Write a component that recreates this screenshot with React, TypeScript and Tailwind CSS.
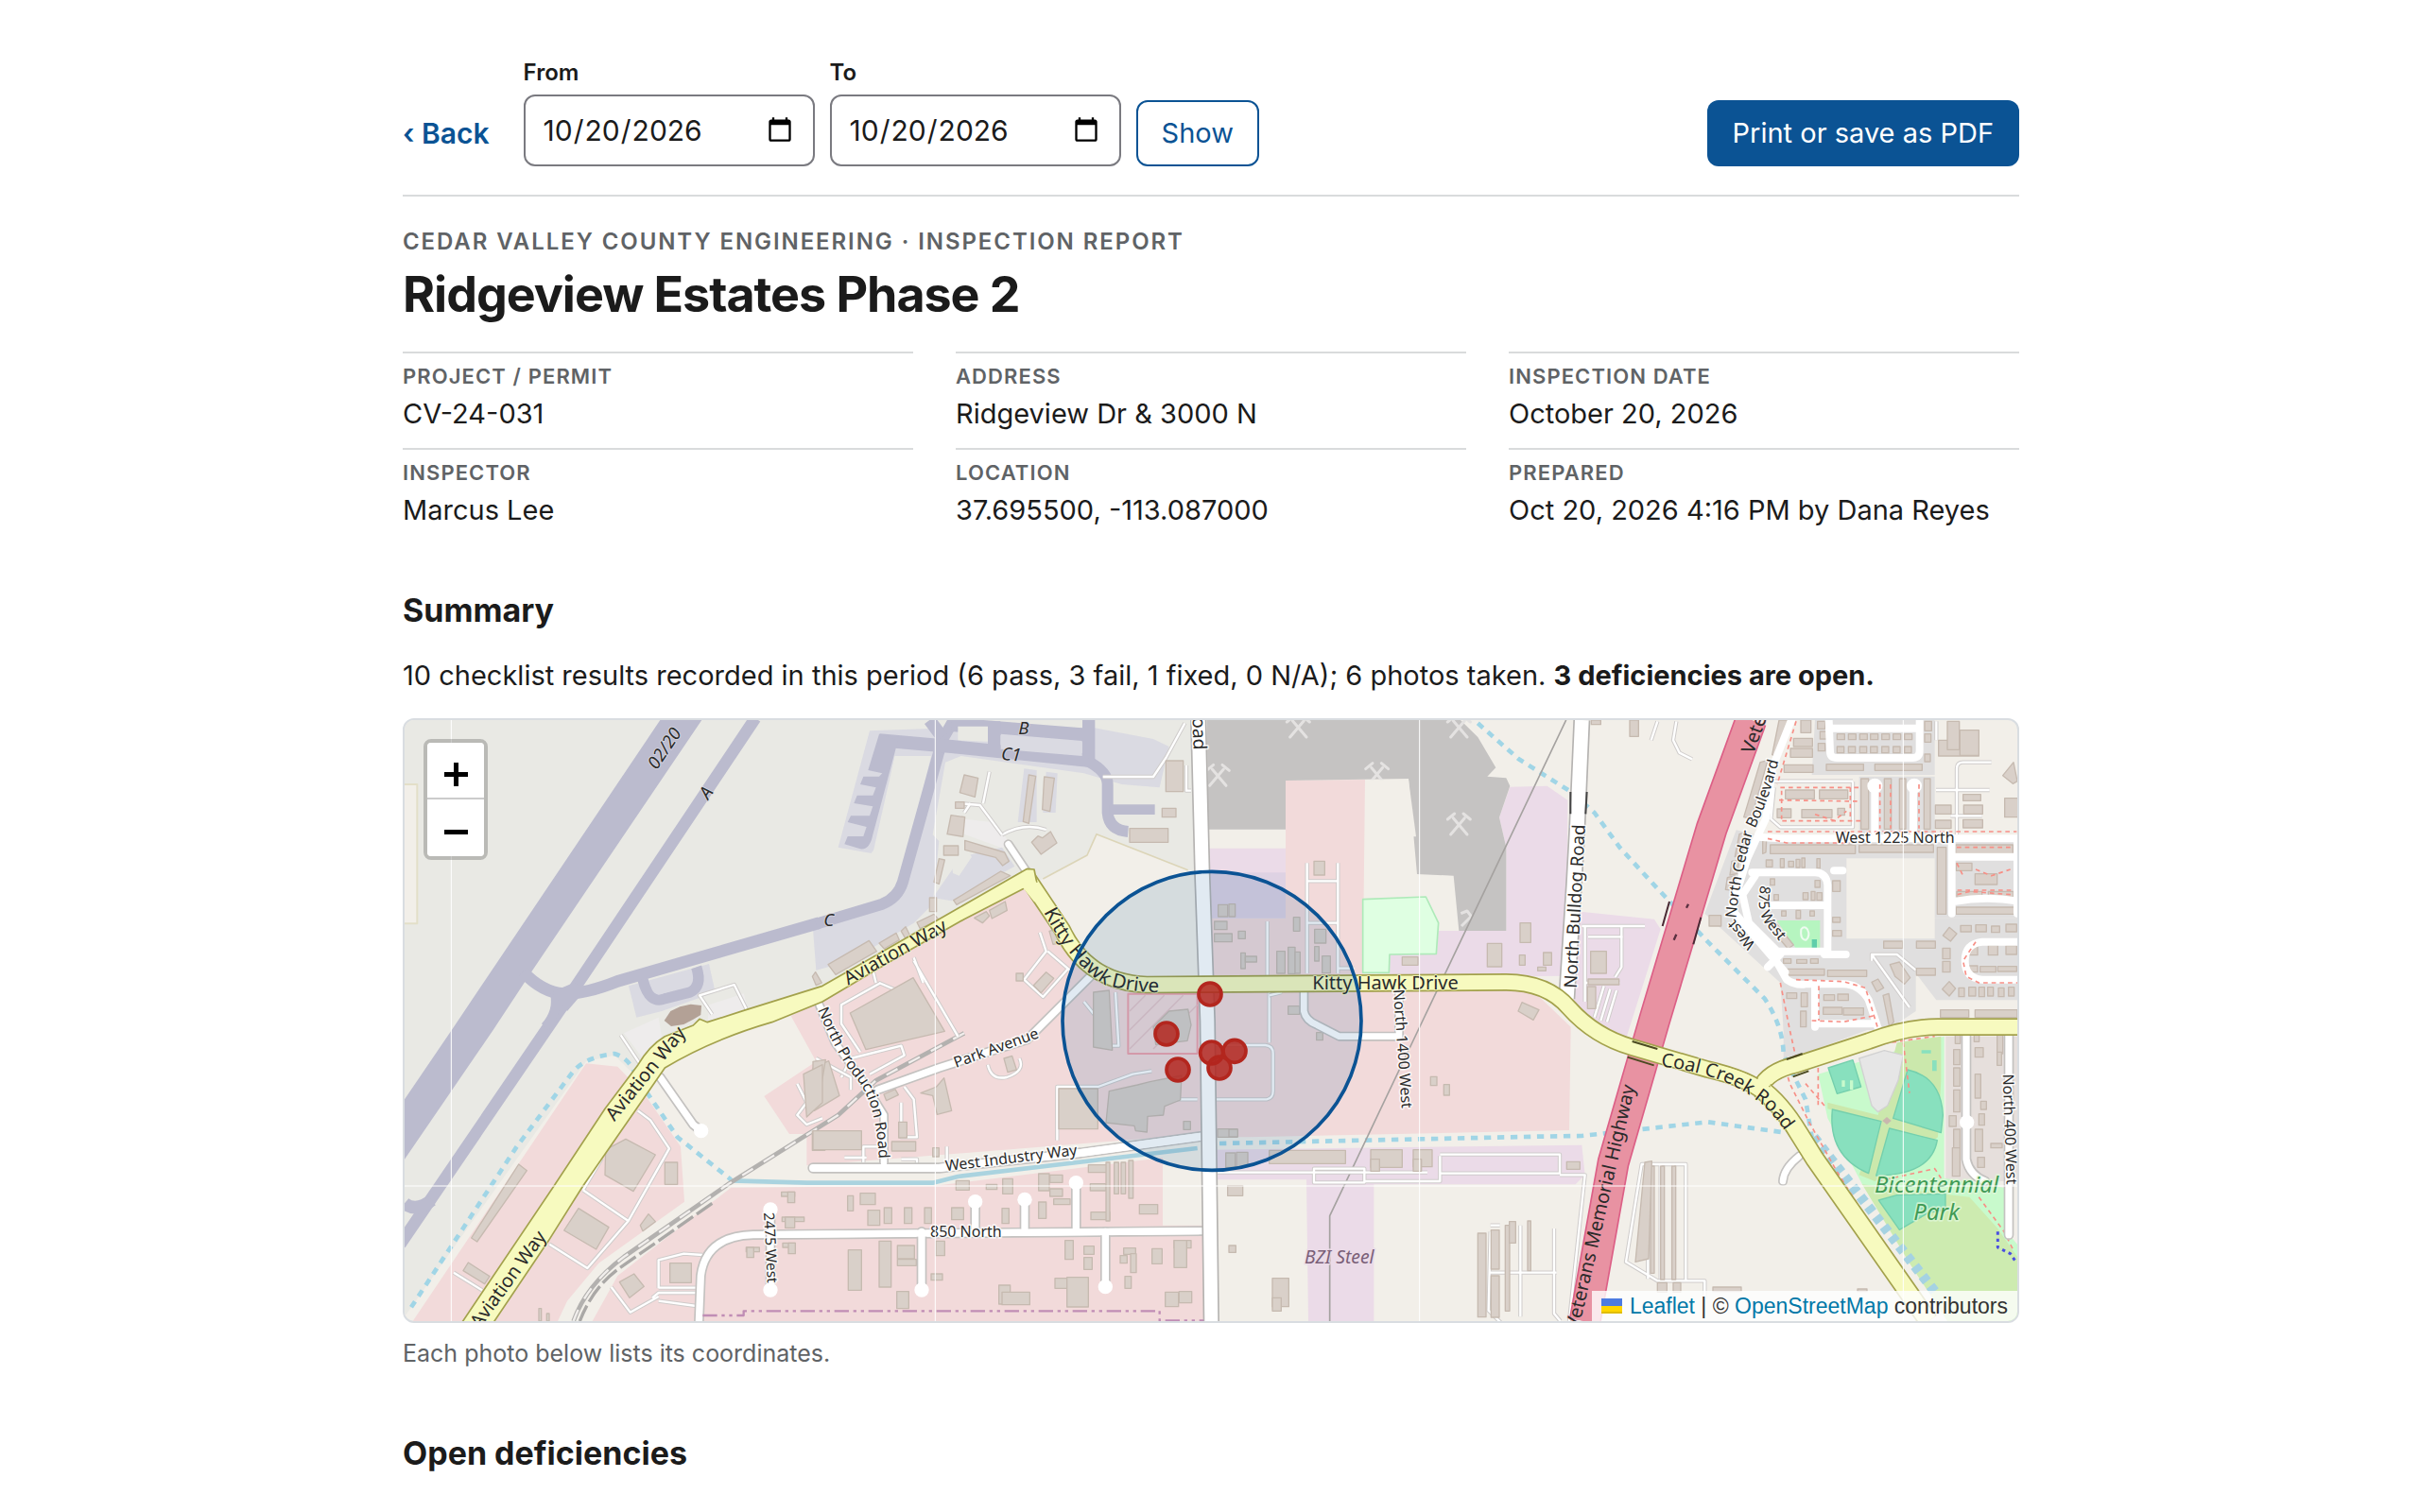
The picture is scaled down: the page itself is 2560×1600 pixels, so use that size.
import { useState, type ReactNode } from "react";

interface MetaItem {
  label: string;
  value: string;
}

const META: MetaItem[] = [
  { label: "Project / Permit", value: "CV-24-031" },
  { label: "Address", value: "Ridgeview Dr & 3000 N" },
  { label: "Inspection date", value: "October 20, 2026" },
  { label: "Inspector", value: "Marcus Lee" },
  { label: "Location", value: "37.695500, -113.087000" },
  { label: "Prepared", value: "Oct 20, 2026 4:16 PM by Dana Reyes" },
];

export default function App() {
  const [from, setFrom] = useState("2026-10-20");
  const [to, setTo] = useState("2026-10-20");

  return (
    <main className="h-screen overflow-hidden bg-white font-[Inter,'Liberation_Sans',sans-serif] text-[29px] text-[#1b1b1b]">
      <div className="mx-auto max-w-[1712px] pl-0.5">
        <header className="flex items-end border-b-2 border-[#d9dbdc] pt-[62px] pb-[30px]">
          <a href="#projects" className="mr-9 flex h-[70px] items-center text-[30px] font-semibold text-[#0b5394]">
            ‹ Back
          </a>
          <form className="flex items-end gap-4" onSubmit={(e) => e.preventDefault()}>
            <DateField id="from" label="From" value={from} onChange={setFrom} />
            <DateField id="to" label="To" value={to} onChange={setTo} />
            <button
              type="submit"
              className="h-[70px] rounded-xl border-2 border-[#0b5394] px-[25px] text-[#0b5394]"
            >
              Show
            </button>
          </form>
          <button type="button" className="ml-auto h-[70px] rounded-xl bg-[#0b5394] px-[27px] text-white">
            Print or save as PDF
          </button>
        </header>

        <p className="mt-8 text-[24px] leading-8 font-semibold tracking-[0.08em] text-[#606366] uppercase">
          Cedar Valley County Engineering · Inspection report
        </p>
        <h1 className="mt-2 text-[52px] leading-[64px] font-bold tracking-[-0.02em]">Ridgeview Estates Phase 2</h1>

        <dl className="mt-7 grid grid-cols-3 gap-x-[45px]">
          {META.map((m) => (
            <div key={m.label} className="border-t-2 border-[#d9dbdc] pt-2.5 pb-3.5">
              <dt className="text-[22px] leading-7 font-semibold tracking-[0.05em] text-[#606366] uppercase">
                {m.label}
              </dt>
              <dd className="mt-1 leading-[44px]">{m.value}</dd>
            </div>
          ))}
        </dl>

        <h2 className="mt-12 text-[34px] leading-[44px] font-bold">Summary</h2>
        <p className="mt-6 leading-[46px]">
          10 checklist results recorded in this period (6 pass, 3 fail, 1 fixed, 0 N/A); 6 photos taken.{" "}
          <strong className="font-bold">3 deficiencies are open.</strong>
        </p>

        <SiteMap />
        <p className="mt-3.5 text-[25px] leading-9 text-[#606366]">Each photo below lists its coordinates.</p>

        <h2 className="mt-[66px] text-[34px] leading-[44px] font-bold">Open deficiencies</h2>
      </div>
    </main>
  );
}

function DateField({
  id,
  label,
  value,
  onChange,
}: {
  id: string;
  label: string;
  value: string;
  onChange: (v: string) => void;
}) {
  return (
    <div className="flex flex-col gap-2">
      <label htmlFor={id} className="text-[24px] leading-[30px] font-semibold">
        {label}
      </label>
      <input
        id={id}
        type="date"
        value={value}
        onChange={(e) => onChange(e.target.value)}
        className="h-[76px] w-[308px] rounded-xl border-2 border-[#7a7a80] bg-white px-[18px] text-[30px]"
      />
    </div>
  );
}

/* ---------- Map ---------- */

// Map drawing units are a third of a pixel.
type Box = [x: number, y: number, w: number, h: number];

const BUILDINGS: { dx: number; dy: number; boxes: Box[] }[] = [
  {
    dx: 1320,
    dy: 0,
    boxes: [
      [1120, 165, 55, 98], [1108, 316, 44, 28], [1005, 380, 122, 44], [452, 296, 28, 20],
      [415, 435, 46, 30], [645, 840, 22, 24], [370, 600, 22, 44],
    ],
  },
  {
    dx: 2640,
    dy: 0,
    boxes: [
      [270, 484, 34, 44], [205, 662, 20, 44], [272, 700, 36, 44], [272, 755, 14, 46], [30, 706, 22, 24],
      [38, 775, 14, 50], [52, 786, 36, 18], [152, 770, 26, 70], [188, 757, 22, 84], [210, 772, 16, 68],
      [296, 785, 26, 54], [188, 944, 36, 26], [550, 788, 50, 26], [820, 745, 46, 74], [924, 680, 34, 62],
      [922, 782, 18, 32], [998, 774, 26, 40], [980, 820, 26, 12], [1148, 770, 50, 70], [1140, 858, 98, 18],
      [1138, 882, 26, 70], [1150, 36, 30, 14], [1272, 36, 28, 52], [-46, 675, 40, 26], [-46, 714, 56, 26],
      [-34, 622, 30, 38], [0, 620, 20, 40],
    ],
  },
  {
    dx: 0,
    dy: 990,
    boxes: [
      [850, 450, 40, 70], [866, 770, 68, 62], [1220, 544, 42, 14], [1240, 544, 22, 34], [1222, 624, 70, 14],
      [1232, 624, 30, 34], [1108, 720, 42, 14], [1110, 720, 22, 32], [1224, 706, 40, 14], [1242, 706, 22, 34],
      [450, 914, 8, 40], [475, 930, 8, 24], [1318, 352, 40, 60],
    ],
  },
  {
    dx: 1320,
    dy: 990,
    boxes: [
      [0, 350, 154, 60], [250, 384, 76, 30], [272, 322, 26, 50], [380, 404, 20, 28], [780, 216, 124, 128],
      [110, 556, 18, 48], [150, 548, 48, 36], [174, 602, 38, 48], [226, 594, 24, 50], [290, 594, 24, 50],
      [354, 594, 22, 50], [454, 508, 42, 30], [550, 520, 34, 16], [602, 502, 32, 48], [440, 594, 38, 38],
      [600, 596, 22, 48], [716, 486, 34, 54], [752, 490, 40, 24], [752, 534, 40, 24], [764, 566, 52, 18],
      [716, 576, 24, 52], [874, 458, 66, 24], [880, 518, 50, 22], [882, 608, 60, 24], [930, 450, 12, 186],
      [956, 450, 14, 100], [978, 450, 14, 100], [1002, 444, 14, 120], [1036, 584, 58, 30], [112, 728, 42, 128],
      [210, 700, 38, 146], [268, 714, 54, 42], [268, 758, 60, 20], [266, 860, 38, 54], [390, 700, 28, 46],
      [375, 804, 36, 20], [590, 840, 36, 60], [600, 862, 88, 40], [768, 818, 46, 32], [806, 815, 68, 94],
      [800, 698, 26, 60], [860, 716, 32, 26], [860, 752, 26, 38], [986, 722, 38, 20], [1008, 740, 18, 60],
      [975, 746, 22, 24], [990, 812, 20, 38], [1076, 724, 32, 48], [1146, 698, 54, 24], [1146, 698, 40, 86],
      [1118, 862, 42, 46], [1162, 860, 40, 36], [1176, 320, 22, 26], [1284, 344, 62, 26], [1310, 420, 30, 46],
      [1344, 418, 36, 46], [1316, 524, 48, 32], [1320, 714, 22, 22],
    ],
  },
  {
    dx: 2640,
    dy: 990,
    boxes: [
      [128, 412, 242, 42], [450, 410, 100, 56], [450, 440, 28, 38], [585, 410, 60, 54], [585, 440, 26, 38],
      [1072, 448, 42, 24], [640, 178, 20, 28], [682, 203, 18, 34], [278, 38, 20, 24], [138, 818, 52, 90],
      [138, 880, 28, 42], [790, 675, 26, 266], [832, 665, 26, 124], [832, 810, 26, 132], [877, 650, 14, 272],
      [890, 638, 20, 68], [948, 636, 10, 158], [0, 345, 28, 24],
    ],
  },
  {
    dx: 3660,
    dy: 990,
    boxes: [
      [1285, 45, 16, 28], [1280, 92, 20, 48], [1280, 150, 20, 58], [1280, 220, 20, 70], [1266, 302, 22, 34],
      [1280, 345, 20, 60], [1276, 404, 24, 90], [1345, 45, 16, 22], [1348, 86, 26, 30], [1348, 170, 18, 76],
      [1366, 256, 18, 26], [1360, 296, 18, 36], [1348, 345, 24, 70], [1356, 434, 22, 32], [1418, 45, 18, 60],
      [1418, 100, 14, 42], [1398, 390, 36, 14], [516, 846, 90, 14], [975, 852, 30, 8], [318, 462, 12, 340],
      [350, 462, 12, 360], [386, 462, 12, 360], [340, 832, 30, 30], [390, 832, 24, 30],
    ],
  },
  {
    dx: 3960,
    dy: 0,
    boxes: [
      [495, 36, 32, 40], [472, 94, 60, 26], [462, 126, 70, 28], [442, 178, 92, 24], [446, 258, 92, 28],
      [554, 258, 90, 28], [420, 318, 44, 28], [498, 320, 96, 26], [612, 316, 22, 22], [686, 222, 24, 160],
      [760, 222, 22, 160], [808, 222, 20, 160], [886, 222, 20, 160], [398, 432, 270, 28], [680, 432, 236, 24],
      [928, 440, 28, 212], [932, 100, 128, 50], [960, 40, 38, 90], [1000, 68, 60, 80], [922, 306, 50, 28],
      [922, 354, 50, 26], [1010, 272, 56, 20], [1012, 306, 60, 28], [1010, 352, 62, 26], [1142, 284, 42, 60],
      [758, 738, 60, 22], [862, 738, 60, 22], [862, 824, 60, 22], [548, 40, 24, 24], [556, 72, 22, 24],
      [550, 110, 22, 24], [888, 40, 22, 30], [888, 80, 20, 26], [888, 144, 18, 24], [576, 176, 118, 20],
      [730, 176, 150, 20], [398, 540, 14, 20], [540, 545, 16, 22], [410, 590, 14, 18], [502, 584, 16, 22],
      [528, 580, 12, 28], [546, 584, 16, 24], [385, 480, 20, 22], [430, 476, 12, 28], [456, 484, 16, 18],
      [480, 478, 12, 26], [498, 474, 10, 30], [546, 476, 10, 30], [596, 546, 24, 34], [596, 662, 24, 16],
      [596, 704, 28, 18], [434, 642, 14, 16], [480, 640, 14, 26], [524, 642, 14, 16], [440, 794, 24, 14],
      [482, 796, 32, 12], [526, 794, 24, 14], [450, 826, 120, 20], [580, 830, 124, 20], [450, 902, 32, 18],
      [496, 902, 20, 44], [494, 960, 18, 50], [568, 908, 34, 18], [612, 906, 34, 20], [566, 948, 60, 22],
      [630, 950, 64, 22], [945, 760, 24, 34], [945, 802, 24, 34], [1002, 688, 34, 20], [1050, 686, 34, 22],
      [1100, 690, 26, 20], [1146, 684, 34, 24], [1022, 754, 34, 28], [1090, 750, 30, 32], [1146, 752, 34, 28],
      [1016, 816, 40, 20], [1064, 818, 50, 18], [1120, 818, 60, 16], [996, 886, 18, 28], [1028, 884, 22, 28],
      [1060, 884, 18, 30], [1088, 884, 18, 28], [1122, 886, 18, 28], [1154, 884, 18, 28], [938, 956, 90, 24],
      [1048, 956, 134, 24], [986, 432, 182, 28], [988, 490, 50, 24], [1048, 524, 70, 34], [990, 580, 80, 18],
      [1090, 580, 80, 18], [988, 630, 186, 22], [204, 656, 38, 34],
    ],
  },
];

// Small houses in the north-east subdivision, laid out on two rows.
const HOUSE_COLS = [610, 646, 682, 716, 752, 788, 824];

// Detached footprints that are not axis aligned.
const FOOTPRINTS = [
  "M1800 210l44 10-10 60-48-14z",
  "M2005 210l22 4-22 150-18-6z",
  "M2054 216l32 4-14 106-24-6z",
  "M1758 338l44 6-6 62-50-8z",
  "M2014 424l20-20 14 6 26-20 20 36-50 36z",
  "M1720 476l18 4-18 76-16-6z",
  "M1802 418l126 38 14 28-20 14-22-26-98-24z",
  "M1766 608l150-92 30 14-170 92z",
  "M1880 640l50-28 6 28-48 26z",
  "M1832 664l38-20 10 14-22 22z",
  "M1650 678l54-26 16 18-60 28z",
  "M1368 812l130-76 24 34-130 74z",
  "M1530 744l54-32 10 22-48 28z",
  "M1600 706l14-14 14 28-14 10z",
  "M1318 850l10-14 20 34-18 8z",
  "M1438 966l200-112 100 170-250 58z",
  "M1320 1140l50-22 34 110-80 48z",
  "M1320 1120l40-6-20 120-20 6z",
  "M1662 1220l50-20 24-28 24 104-46 12-14-60z",
  "M1926 1110l26-8 14 44-28 8z",
  "M2020 878l40-42 24 20-40 46z",
  "M2070 706l20-6 12 44-20 4z",
  "M2210 900l50-6 10 190-60-10z",
  "M2400 1010l50-50 60-6 10 50-12 50-100 12z",
  "M2260 1214l90-20 40-10 100-20-4 78-50 20-4 28-50 4-2 50-36-4-4-16-90-10z",
  "M1545 1224l36-16 10 18-38 18z",
  "M662 1400l64-34 94 50-70 116-90-52z",
  "M576 1586l96 60-40 70-102-60z",
  "M706 1820l46-26 32 40-46 36z",
  "M386 1446l26 20-158 226-18-12z",
  "M226 1758l68 44-16 24-68-42z",
  "M772 1640l26-36 22 24-40 30z",
  "M1290 1160l60-30v120l-50 46z",
  "M3570 932l54 24-18 32-48-28z",
  "M4386 36h38l-38 120-22-10z",
  "M4326 170l24-6-52 184-24-4z",
  "M4260 398l22-6-14 70-22 8z",
  "M4236 484l24-4-8 44-22 4z",
  "M4222 536l24-6-10 46-20-2z",
  "M4738 812l30-8 34 50-18 20-30-24z",
  "M5096 212l34-42 12 60-14 8z",
  "M4906 720l20-26 24 20-20 24z",
  "M4904 890l22-24 20 22-20 24z",
  "M4680 868l20-10 18 28-22 12z",
  "M4716 910l18-6 16 90-14 16z",
  "M4354 690l20-12 58 72-18 12z",
  "M4334 420l12-4-2 40-10 4z",
  "M3960 1440l22-4-10 310-42 10z",
];

interface RoadProps {
  d: string;
  w: number;
  fill?: string;
  casing?: string;
  edge?: number;
}

function Road({ d, w, fill = "#ffffff", casing = "#c4c2c0", edge = 5 }: RoadProps) {
  return (
    <>
      <path d={d} stroke={casing} strokeWidth={w + edge * 2} />
      <path d={d} stroke={fill} strokeWidth={w} />
    </>
  );
}

const SERVICE_ROADS = [
  "M1600 900l-70-30M1520 870l-10-40M1640 790l30 80M1535 870l-125 70v60l60 90M1640 800l140 240",
  "M2065 770l70 60M1990 860l70-90-20-60M1990 860l60 55 80-90",
  "M1410 1170l30-60 160-40 10 30-110 60M1600 1250v110h50l-10-120-30-40M1480 1440v-50h60M1420 1425h70M1600 1430h50v14",
  "M1745 1390v50M1875 1130q10 50 60 40 60-20 40-60M1330 1110l110 60v40",
  "M2095 1370v-170h130l110-40 60-10M2180 930l40 50 10 90h60l-10-170",
  "M2440 1240h100M2570 1240h190q20-4 20-26v-120q0-24-24-26h-180",
  "M2768 900v160M2762 675v170M2888 490v350M2986 490v350M2888 547h98M2888 680h98M2988 824h50",
  "M2768 910l40-10",
  "M3760 690h200M3770 690v240M3780 724h110M3886 690v130l-20 32M3770 870h110",
  "M3800 980l30-100M3820 990l30-100M3840 994l30-100",
  "M2910 1460h160v44h-160zM2590 1472h680M3070 1500h240v-80M3310 1415h380v60h-380M3690 1480h80l-50 464",
  "M3470 1790h210M3565 1640v290M3672 1650v270l20 24M3470 1660l-6 250 40 40M3500 1640h-30",
  "M3950 1446h140v370h-90l-100-60zM3970 1450v360M4010 1450v360M4050 1450v360M4090 1816h60v60",
  "M590 1528l144 98-130 150-120-76M734 1626l130-230-60-90-40-30M590 1528l60-100M180 1790l90 56",
  "M830 1840v-90l80-20 60 4M830 1838h120M810 1870l20-16h120M830 1880l120 16M680 1836l60 80 90-50",
  "M710 1036l60 90M1000 970l-40-60 110-34 50 100M1270 1190l30 60-30 40 30 30 50-20",
  "M2500 46l-60 110-40 60h-160M2505 180v80h15M1880 200l-20 100M1920 400q70-40 140-16",
  "M1780 300l70 6 70 94M1800 330l20-30",
  "M4370 230h250M4370 250l-10 100 30 26h230v-144M4000 40l-20 60M4060 40l-10 60 20 40 40 20",
  "M4950 400v-210q0-20 20-20h90M4884 258h170M4930 340h100M4885 40v60",
  "M4680 780l120 168M4680 800v-20h80l60 50",
];

const WHITE_STREETS = [
  "M4425 36l-60 150-20 160-60 130-50 160 110 130 60 70",
  "M4330 408l60 4h760",
  "M4544 36l4 100q0 20 22 20h240q22 0 22-24v-96M4550 62h280",
  "M4690 390v-140M4812 390v-140",
  "M4300 520h200q36 0 40 40v220M4560 514h28M4330 624h200M4310 530l-40 60 20 90 90 90h160M4530 780h68M4390 780l-40 40",
  "M4360 770l50 90q30 20 60 14h120q50 0 80 50l30 90M4500 880v130M4500 1000h190",
  "M4934 420v230M4940 470h210M4940 612q110-20 210 0M5142 420v230",
  "M5150 740h-120q-54 6-54 60t54 60h120",
];

const FOOTPATHS = [
  "M4440 40l-60 200M4350 390h790M4350 412l60 14h200",
  "M4390 250h250M4386 290l260 4M4396 356h250M4500 335l60 20 40-30M4394 260v90M4612 250v100",
  "M4706 240v140M4740 240v140M4830 240v140",
  "M4950 440h180M4950 490l20 40M5010 510l50 20 60-20M4952 576h180M4952 590l40-10 130 10",
  "M4390 870l30 150 20 90M4440 860l150 6 70 20 40 130M4512 880v110M4490 990l100 4 100-20",
  "M5010 740l-40 60 10 50 40 20h160",
  "M4400 1120l20 70 60 120 90 160 240 380M4440 1120l80-30 360-50M4470 1190l60 70M4510 1140v120M4700 1500l180-40 20 30M4780 1060l20 160M5020 1550l80 110 30 60",
  "M5120 1000v100",
];

const CUL_DE_SACS = [
  [1665, 1845], [1835, 1565], [1992, 1558], [2155, 1505], [2248, 1835], [1185, 1590], [1185, 1845], [965, 1340], [4982, 1313],
];

const PHOTO_PINS = [[2580, 906], [2442, 1032], [2478, 1146], [2585, 1092], [2658, 1087], [2610, 1140]];

function SiteMap() {
  return (
    <section
      aria-label="Site map"
      className="relative mt-[22px] h-[640px] overflow-hidden rounded-xl border-2 border-[#d9dde1] bg-[#f2efe9]"
    >
      <svg
        viewBox="24 36 5118 1908"
        preserveAspectRatio="xMidYMid slice"
        className="block h-full w-full font-['Noto_Sans','Open_Sans',sans-serif]"
        fill="none"
        strokeLinejoin="round"
      >
        <defs>
          <path id="lbl-kitty" d="M2052 645Q2130 800 2240 872Q2350 912 2520 896" />
          <path id="lbl-coal" d="M4010 1135Q4210 1160 4310 1240Q4370 1280 4430 1380" />
          <path id="lbl-prod" d="M1335 955Q1400 1110 1455 1170Q1530 1260 1530 1470" />
          <path id="lbl-boul" d="M4250 665Q4260 540 4300 400Q4360 280 4392 130" />
          <path id="lbl-875" d="M4328 560Q4310 640 4345 685L4430 792" />
          <g id="mine" stroke="#e4e2e1" strokeWidth="9" strokeLinecap="round">
            <path d="M-26 34L18-18M26 34L-18-18" />
            <path d="M-36-14L-14-32M36-14L14-32" />
          </g>
        </defs>

        <LandUse />
        <Airfield />

        {/* water */}
        <path d="M1060 1498L1300 1505H1700L1780 1485L2540 1395" stroke="#aad3df" strokeWidth="14" />
        <g stroke="#a0d5e6" strokeWidth="14" strokeDasharray="22 20">
          <path d="M45 1900L380 1390L560 1150Q600 1105 690 1095Q740 1110 760 1170L890 1360L1060 1495" />
          <path d="M2610 1380L3620 1358L3760 1356L4040 1325L4160 1312L4400 1345" />
          <path d="M3430 46L3560 160L3720 260L3800 330L3880 440L3990 560L4160 740L4340 920Q4400 1010 4400 1100L4470 1240L4490 1360" />
        </g>
        <path d="M4496 1360L4888 1860" stroke="#a5d2e2" strokeWidth="32" strokeDasharray="22 18" />

        {/* power line */}
        <path d="M3710 36L3255 990L2960 1610V1944" stroke="#a5a2a0" strokeWidth="5" />

        {/* railway */}
        <path d="M1800 1030L1520 1180L1400 1290L1050 1510L720 1740Q600 1830 560 1944" stroke="#b3b1af" strokeWidth="14" />
        <path
          d="M1800 1030L1520 1180L1400 1290L1050 1510L720 1740Q600 1830 560 1944"
          stroke="#f1eeec"
          strokeWidth="7"
          strokeDasharray="40 40"
        />
        <path d="M1000 1570L700 1780Q620 1840 580 1944" stroke="#aaa8a6" strokeWidth="10" strokeDasharray="60 14" />

        {/* service roads */}
        <g>
          {SERVICE_ROADS.map((d) => (
            <Road key={d} d={d} w={7} casing="#cfcccb" edge={3} />
          ))}
        </g>

        <Buildings />

        {/* residential streets */}
        <g strokeLinecap="round">
          {WHITE_STREETS.map((d) => (
            <path key={d} d={d} stroke="#ffffff" strokeWidth="24" />
          ))}
          <circle cx="4690" cy="245" r="24" fill="#fff" />
          <circle cx="4815" cy="245" r="24" fill="#fff" />
        </g>
        <g stroke="#f78f86" strokeWidth="5" strokeDasharray="14 12">
          {FOOTPATHS.map((d) => (
            <path key={d} d={d} />
          ))}
        </g>

        {/* minor roads */}
        <g strokeLinecap="round">
          <Road w={22} d="M958 1950L964 1800Q980 1674 1130 1670L2555 1658" />
          <Road w={22} d="M1665 1660V1845M1835 1650V1565M1992 1650V1558M2155 1650V1505M2248 1660V1835M1185 1590V1845" />
          <path d="M1200 1669L2540 1658" stroke="#fff" strokeWidth="22" />
          <Road w={24} d="M1320 1458H1720L2170 1410L2550 1358" />
          <Road w={22} d="M1525 1210L1720 1140L2000 1050L2090 960L2200 850" />
          <Road w={20} d="M1340 940L1390 1060L1470 1170L1545 1290V1440" />
          <Road w={22} d="M835 1170L940 1320L965 1340" />
          <Road w={20} d="M4450 1420Q4400 1460 4398 1500" />
          <Road w={20} d="M2878 880V960Q2884 990 2920 1004L2990 1040H3180V880" />
          <Road w={22} d="M4980 1030V1430Q4990 1480 5040 1500M5115 1040V1670" />
          <Road w={20} d="M1940 430L2000 520" />
        </g>
        <g fill="#fff">
          {CUL_DE_SACS.map(([cx, cy]) => (
            <circle key={`${cx}-${cy}`} cx={cx} cy={cy} r="23" />
          ))}
        </g>
        <path d="M1320 1458H1720L2170 1410L2550 1358" stroke="#fff" strokeWidth="24" />

        <Road w={42} d="M2543 36L2555 510L2572 990L2584 1944" casing="#b5b3b1" />
        <Road w={44} d="M3760 36L3745 380L3735 560L3712 920" casing="#b5b3b1" />
        <path d="M3724 264v70M3776 264l-4 70" stroke="#444" strokeWidth="6" />

        {/* trunk road */}
        <Road w={92} d="M4297 36L4172 380L3990 990L3860 1440L3770 1944" fill="#e892a2" casing="#dc5f86" />
        <path d="M4038 612l-22 78M4138 662l-24 86" stroke="#4a2a34" strokeWidth="6" />
        <path d="M4060 716l-8 18M4098 620l-6 12" stroke="#5a3040" strokeWidth="7" />

        {/* secondary roads */}
        <Road
          w={46}
          fill="#f7fabf"
          casing="#a3a14c"
          d="M4325 1205Q4350 1150 4440 1130L4670 1055Q4790 1010 4890 1010H5160"
        />
        <Road
          w={54}
          fill="#f7fabf"
          casing="#a3a14c"
          d="M4325 1205Q4390 1250 4450 1350L4500 1430L4860 1944"
        />
        <Road
          w={46}
          fill="#f7fabf"
          casing="#a3a14c"
          d="M2003 540L2110 700Q2190 870 2380 876L3520 868Q3650 868 3720 950Q3800 1040 3920 1075L4160 1145Q4290 1175 4340 1220"
        />
        <path
          d="M205 1950L498 1515L660 1270L765 1130Q800 1070 850 1040L940 1005L960 985L985 995L1100 958L1350 880L1560 760L1780 634L2000 508L2022 510L2030 550L1995 568L1800 668L1620 770L1350 930L1190 995Q1000 1050 850 1140L760 1270L590 1515L480 1690L305 1950Z"
          fill="#f7fabf"
          stroke="#a3a14c"
          strokeWidth="5"
        />
        <path d="M1996 545L2040 600" stroke="#f7fabf" strokeWidth="44" />
        <path
          d="M4325 1205Q4350 1150 4440 1130M4325 1205Q4380 1240 4420 1310M4200 1155Q4290 1175 4340 1220"
          stroke="#f7fabf"
          strokeWidth="42"
        />
        <path d="M3920 1056l80 24M3905 1106l84 26M4410 1113l50-18M4430 1168l50-18" stroke="#4b4a20" strokeWidth="6" />

        {/* township boundary */}
        <path
          d="M970 1926h130v-14h1320v30h140"
          stroke="#c08db5"
          strokeWidth="7"
          strokeDasharray="46 14 10 14 10 14"
        />

        <Labels />

        {/* tile seams */}
        <path
          d="M172 36V1944M1708 36V1944M3245 36V1944M4780 36V1944M24 1515H5142"
          stroke="#fff"
          strokeWidth="3"
        />

        {/* project radius and photo pins */}
        <circle cx="2586" cy="991" r="474" fill="#0b5394" fillOpacity=".12" stroke="#0b5394" strokeWidth="11" />
        <g fill="#b3261e" fillOpacity=".85" stroke="#b3261e" strokeWidth="11">
          {PHOTO_PINS.map(([cx, cy]) => (
            <circle key={`${cx}-${cy}`} cx={cx} cy={cy} r="36" />
          ))}
        </g>
      </svg>

      <div className="absolute top-5 left-5 flex flex-col rounded-lg border-4 border-black/20 bg-clip-padding">
        <ZoomButton label="Zoom in" className="rounded-t border-b-2 border-[#ccc]">
          <path d="M0 12.5h25M12.5 0v25" />
        </ZoomButton>
        <ZoomButton label="Zoom out" className="rounded-b">
          <path d="M0 12.5h25" />
        </ZoomButton>
      </div>

      <p className="absolute right-0 bottom-0 flex h-8 items-center gap-2 bg-white/80 px-2.5 font-['Liberation_Sans',Arial,sans-serif] text-[23px] text-[#333]">
        <svg viewBox="0 0 12 8" className="h-4 w-[22px]" preserveAspectRatio="none" aria-hidden="true">
          <path fill="#4c7be1" d="M0 0h12v4H0z" />
          <path fill="#ffd500" d="M0 4h12v3H0z" />
          <path fill="#e0bc00" d="M0 7h12v1H0z" />
        </svg>
        <span>
          <a href="#leaflet" className="text-[#0078a8]">Leaflet</a> | ©{" "}
          <a href="#osm" className="text-[#0078a8]">OpenStreetMap</a> contributors
        </span>
      </p>
    </section>
  );
}

function ZoomButton({ label, className, children }: { label: string; className: string; children: ReactNode }) {
  return (
    <button
      type="button"
      aria-label={label}
      className={`grid h-[60px] w-[60px] place-items-center bg-white pt-2 ${className}`}
    >
      <svg viewBox="0 0 25 25" className="size-[25px]" stroke="#000" strokeWidth="5" fill="none">
        {children}
      </svg>
    </button>
  );
}

function LandUse() {
  return (
    <g>
      <path
        fill="#e9e9e4"
        d="M24 36H2545L2556 520L2510 512L2220 398L2190 465L2050 540L1320 930L850 1080L740 1150L690 1100L600 1120L24 1930Z"
      />
      <path d="M2050 540L2190 465L2220 398L2510 512" stroke="#dcd5b8" strokeWidth="5" />
      <path d="M24 240h40v442H24" fill="#f2efe9" stroke="#e3dfc8" strokeWidth="6" />

      {/* industrial / commercial */}
      <g fill="#f2dada">
        <path d="M50 1944L600 1126L700 1136L790 1230L900 1390L912 1565L640 1760L540 1880L510 1944Z" />
        <path d="M1250 975L1330 1120L1165 1230L1245 1350H1300V1450L2560 1350V870L2200 830L2010 540L1380 910Z" />
        <path d="M1060 1520L1700 1515L2430 1425V1640H2560V1944H620L700 1800Z" />
        <path d="M2820 228L3072 225L3065 850H2575V665H2820Z" />
        <path d="M2575 890H3600L3725 1010L3720 1338L2700 1360H2580Z" />
      </g>
      <g fill="#ebdbe8">
        <path d="M2575 443H2820V665H2575Z" />
        <path d="M3150 775H3300L3305 705H3520V440L3498 345L3532 248L3650 245L3715 290L3712 640L3990 668L4010 700L3890 1080L3760 1000L3700 850H3150Z" />
        <path d="M2580 1400L3760 1385L3770 1480L3740 1510H3100V1944H2892L2886 1495H2580Z" />
      </g>
      <path fill="#d5cbe0" d="M2575 520H2820V665H2575Z" fillOpacity=".6" />
      <path fill="#f2efe9" d="M3560 850L3700 848L3730 920L3690 900Z" />

      {/* quarry */}
      <path
        fill="#c5c3c2"
        d="M2570 36H3375L3430 90L3487 187L3460 215L3520 220L3532 245L3498 345L3520 440V705H3370L3353 530L3237 525L3210 222L2820 228V383H2575Z"
      />
      <use href="#mine" x="2605" y="210" />
      <use href="#mine" x="2860" y="56" />
      <use href="#mine" x="3370" y="56" />
      <use href="#mine" x="3370" y="365" />
      <use href="#mine" x="3110" y="205" />
      <path d="M3378 690l30-30M3376 650l20-8 14 18" stroke="#e4e2e1" strokeWidth="9" />
      <path fill="#f2efe9" d="M3072 226h138l24 180h-162z" />

      <path
        fill="#dfffe2"
        stroke="#aeeab9"
        strokeWidth="5"
        d="M3065 605L3265 597L3305 680L3298 778L3150 780L3148 838H3065Z"
      />

      {/* parking and fenced lot */}
      <path fill="#eeecec" d="M1800 350l90 10 60 70-30 12-120-44zM720 1030l110-50 10 60-60 70zM990 940l110-36 16 60-130 26z" />
      <path d="M2320 905h220v190h-220z" stroke="#f0a3ac" strokeWidth="6" />
      <path d="M2325 960l50-50M2325 1020l110-110M2325 1080l170-170M2400 1080l140-140" stroke="#e4c3c6" strokeWidth="4" />

      {/* housing */}
      <g fill="#e0dfdf">
        <path d="M4500 36H4880V210H4490Z" />
        <path d="M4640 215H4880V400H4640Z" />
        <path d="M4250 385L4400 420L4880 420V475H4600V730H4880V665H5142V925H4885L4820 840V960L4730 1020H4400L4390 870L4150 650Z" />
        <path d="M4880 420H5142V665H4880Z" />
        <path d="M4400 1000H4720L4400 1120Z" />
      </g>
      <path fill="#e6dfdc" d="M4915 1040H5142V1500H4915Z" />

      {/* parks */}
      <path fill="#b6f5c0" d="M4378 672H4516V762H4440Z" />
      <path d="M4456 700q10-12 20 0 10 20-4 34-20 0-16-34z" stroke="#eefbf0" strokeWidth="6" />
      <path fill="#5fceaa" d="M4490 732h16v30h-16z" />
      <path fill="#c8facc" d="M4510 1160L4910 1040V1490L5100 1520V1650L5142 1700V1944H4920L4650 1510L4540 1300Z" />
      <path fill="#cdebb0" d="M4650 1510L4990 1550L5080 1650L5142 1740V1944H4920L4800 1760Z" />
      <path fill="#cbe8ac" d="M4760 1060L4900 1040V1180L4890 1360L4690 1500L4640 1480L4700 1310L4540 1270V1250L4700 1290Z" />
      <g fill="#88e0be" stroke="#74cfad" strokeWidth="4">
        <path d="M4555 1272L4710 1310L4670 1475Q4540 1420 4555 1272Z" />
        <path d="M4794 1146Q4900 1170 4906 1290L4900 1346L4748 1300Z" />
        <path d="M4736 1332L4888 1370Q4870 1480 4694 1482Z" />
        <path d="M4542 1140L4620 1115L4646 1200L4570 1222Z" />
        <path d="M4702 1560L4760 1544L4914 1540V1590L4860 1600L4768 1654Z" />
      </g>
      <path d="M4590 1200v-20M4616 1210v-30" stroke="#c8facc" strokeWidth="10" />
      <path fill="#e6e6e6" stroke="#d2d2d2" strokeWidth="4" d="M4640 1110L4720 1085L4780 1100L4764 1180L4730 1260L4700 1280L4680 1260Z" />
      <path fill="#c9b7ae" d="M4714 1308l14-12 14 12-14 12z" />
      <path fill="#88e0be" d="M4872 1116h14v34h-14zM4838 1084h30v10h-30z" />
      <path d="M5080 1660v50l40 20 20 30" stroke="#4a4fe0" strokeWidth="9" strokeDasharray="10 12" />
    </g>
  );
}

function Airfield() {
  return (
    <g>
      {/* aprons */}
      <g fill="#dadae2">
        <path d="M1500 70L1780 60L2210 60L2400 96L2450 120L2420 250L2300 240L2180 205L1790 150L1740 170L1700 400L1720 420L1700 620L1640 680L1440 800L1330 830L1320 700L1590 600L1680 150H1580L1510 460L1400 440Z" />
        <path d="M1790 470L1920 440L1960 500L1760 610L1700 600Z" />
        <path d="M1990 190L2030 195V360H1970ZM2060 200L2096 205L2090 330H2050Z" />
        <path d="M735 880L990 810L1010 900L840 960L760 980Z" />
        <path d="M1344 700V830L1330 760Z" />
      </g>
      <path fill="#e9e9e4" d="M1580 150H1695L1600 540L1560 590L1330 660L1520 440Z" />
      <path fill="#e9e9e4" d="M1760 480l50-30 14 20-40 60-20-8z" />

      {/* runway and taxiways */}
      <path fill="#bbbbce" d="M835 36H967L430 830L305 1020L24 1430V1240L180 1010Z" />
      <g stroke="#bbbbce">
        <path d="M1137 30L565 885L480 1010L10 1700" strokeWidth="38" />
        <path d="M400 835Q460 900 530 905Q600 905 700 865L1340 680" strokeWidth="38" />
        <path d="M500 900Q515 960 470 1010" strokeWidth="30" />
        <path d="M1330 683L1540 620Q1590 600 1605 550L1730 100L1770 30" strokeWidth="36" />
        <path d="M780 860Q800 940 850 920L930 900Q970 880 950 820" strokeWidth="34" />
        <path d="M1690 36L1730 90" strokeWidth="40" />
        <path d="M1530 100L1760 120L2200 165" strokeWidth="42" />
        <path d="M1760 50L2200 85" strokeWidth="44" />
        <path d="M1895 40V130M2195 36V180" strokeWidth="40" />
        <path d="M2190 165Q2256 200 2255 240V330Q2260 385 2320 390" strokeWidth="36" />
        <path d="M2260 320H2405" strokeWidth="32" />
        <path d="M24 1570Q60 1600 110 1560" strokeWidth="40" />
      </g>
      <path fill="#bbbbce" d="M1530 80L1590 100L1510 400Q1500 450 1470 445L1420 430L1430 405H1480L1490 375L1430 360L1440 340H1500L1510 310L1450 300L1460 275H1510L1520 250L1470 240L1480 215H1530L1540 205L1495 195Z" />
      <path fill="#bbbbce" d="M490 900L560 870L600 890L540 960Z" />
      <path fill="#dadae2" d="M810 865L920 832Q940 850 930 878L830 908Q800 900 810 865Z" />
      <path fill="#e9e9e4" d="M1780 56h95v48l-95-4z" />
      <path fill="#dadae2" d="M1916 80l258 22v48l-258-22z" />
    </g>
  );
}

function Buildings() {
  return (
    <g fill="#d9d0c9" stroke="#c6bab0" strokeWidth="4">
      {BUILDINGS.map(({ dx, dy, boxes }) => (
        <g key={`${dx}-${dy}`} transform={`translate(${dx} ${dy})`}>
          {boxes.map(([x, y, w, h]) => (
            <rect key={`${x}-${y}-${w}-${h}`} x={x} y={y} width={w} height={h} />
          ))}
        </g>
      ))}
      {HOUSE_COLS.map((x) => (
        <g key={x} transform="translate(3960 0)">
          <rect x={x} y="80" width="24" height="18" />
          <rect x={x} y="120" width="22" height="20" />
        </g>
      ))}
      {FOOTPRINTS.map((d) => (
        <path key={d} d={d} />
      ))}
      <path
        fill="#b3a196"
        stroke="none"
        d="M848 990l20-30 30-14 34-8 34 4-2 30-24 14-30 16-40 6z"
      />
    </g>
  );
}

function Labels() {
  return (
    <g fill="#2a2a2a" stroke="#fff" strokeOpacity=".75" strokeWidth="10" style={{ paintOrder: "stroke" }} fontSize="48">
      <g fontSize="60" stroke="#f7fabf" strokeWidth="6">
        <text transform="translate(690 1312) rotate(-51)">Aviation Way</text>
        <text transform="translate(1432 878) rotate(-29)">Aviation Way</text>
        <text transform="translate(262 1970) rotate(-54)">Aviation Way</text>
        <text fontSize="62">
          <textPath href="#lbl-kitty">Kitty Hawk Drive</textPath>
        </text>
        <text x="2905" y="890">Kitty Hawk Drive</text>
        <text>
          <textPath href="#lbl-coal">Coal Creek Road</textPath>
        </text>
      </g>
      <g fontSize="60" stroke="#e892a2" strokeWidth="4">
        <text transform="translate(4304 146) rotate(-70)">Veterans</text>
        <text transform="translate(3750 1972) rotate(-77)">Veterans Memorial Highway</text>
      </g>
      <text fontSize="56" transform="translate(3743 888) rotate(-87)">North Bulldog Road</text>
      <text fontSize="58" transform="translate(2523 -8) rotate(88)">Road</text>

      <g fontStyle="italic" fontSize="56" stroke="#dadae2" strokeWidth="6">
        <text transform="translate(824 196) rotate(-56)">02/20</text>
        <text transform="translate(988 290) rotate(-56)">A</text>
        <text x="1354" y="690">C</text>
        <text x="1972" y="82">B</text>
        <text transform="translate(1916 162) rotate(4)">C1</text>
      </g>

      <text>
        <textPath href="#lbl-prod">North Production Road</textPath>
      </text>
      <text transform="translate(1774 1140) rotate(-20)">Park Avenue</text>
      <text transform="translate(1742 1468) rotate(-7)">West Industry Way</text>
      <text x="1692" y="1678">850 North</text>
      <text transform="translate(1164 1600) rotate(87)" fontSize="46">2475 West</text>
      <text transform="translate(3162 892) rotate(86)">North 1400 West</text>
      <text x="4565" y="427">West 1225 North</text>
      <text>
        <textPath href="#lbl-boul">North Cedar Boulevard</textPath>
      </text>
      <g fontSize="46">
        <text>
          <textPath href="#lbl-875">875 West</textPath>
        </text>
        <text transform="translate(4312 748) rotate(-130)">West</text>
      </g>
      <text transform="translate(5096 1160) rotate(88)">North 400 West</text>

      <text x="2880" y="1762" fontStyle="italic" fontSize="58" fill="#7a5f78" stroke="#ebdbe8">
        BZI Steel
      </text>
      <g fontStyle="italic" fontSize="72" fill="#3f9a55" stroke="#dff7d8" textAnchor="middle">
        <text x="4886" y="1536">Bicentennial</text>
        <text x="4886" y="1622">Park</text>
      </g>
    </g>
  );
}
